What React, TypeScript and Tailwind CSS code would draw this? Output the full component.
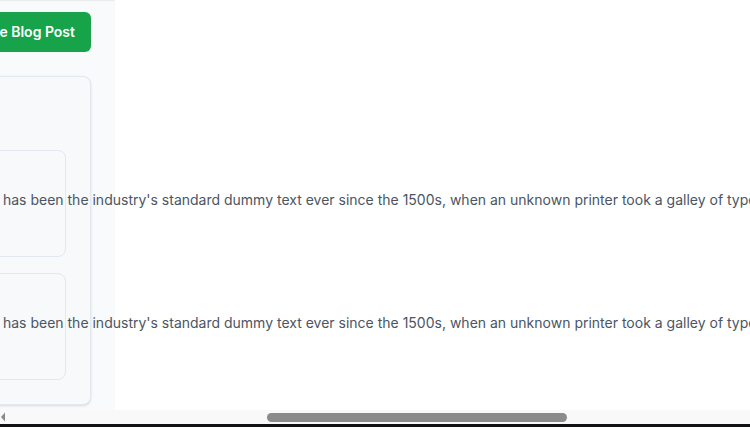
import { useLayoutEffect, useRef } from "react";

const LEAD = "Lorem Ipsum is simply dummy text of the printing and typesetting industry. Lorem Ipsum ";
const REST =
  "has been the industry's standard dummy text ever since the 1500s, when an unknown printer took a galley of type and scrambled it to make a type specimen book.";

function PostCard({ title, date, spanRef }: { title: string; date: string; spanRef?: React.Ref<HTMLSpanElement> }) {
  return (
    <article className="h-[107px] rounded-lg border border-[#e2e8f0] bg-[#f7f9fa] px-4 pt-[15px]">
      <h3 className="text-base leading-6 font-semibold text-gray-900">{title}</h3>
      <p className="text-sm leading-5 text-[#4b5563] whitespace-nowrap">
        {LEAD}
        <span ref={spanRef}>{REST}</span>
      </p>
      <p className="mt-1 text-xs leading-5 text-gray-400">{date}</p>
    </article>
  );
}

export default function App() {
  const scroller = useRef<HTMLDivElement>(null);
  const mark = useRef<HTMLSpanElement>(null);

  useLayoutEffect(() => {
    const s = scroller.current;
    const m = mark.current;
    if (!s || !m) return;
    const sRect = s.getBoundingClientRect();
    const mRect = m.getBoundingClientRect();
    s.scrollLeft = mRect.left - sRect.left - 3;
  }, []);

  return (
    <div className="w-[750px] h-[427px] flex flex-col bg-white overflow-hidden font-['Inter','Noto_Sans',sans-serif]">
      <div ref={scroller} className="h-[410px] overflow-hidden">
        <div className="flex h-full w-max">
          <main className="w-[766px] shrink-0 h-full bg-[#f9fafb] shadow-[inset_0_2px_2px_-1px_rgba(0,0,0,0.07)] px-6 pt-3">
            <div className="flex items-center justify-between">
              <h1 className="text-2xl font-bold text-gray-900">Blog Posts</h1>
              <button className="h-10 px-4 rounded-md bg-[#16a34a] text-white text-sm font-semibold">
                Create Blog Post
              </button>
            </div>
            <section className="mt-6 rounded-lg border border-[#e2e8f0] bg-[#f7f9fa] shadow-sm p-6">
              <h2 className="h-7 text-lg font-semibold text-gray-900">Recent Posts</h2>
              <div className="mt-[21px] flex flex-col gap-4">
                <PostCard title="What is Lorem Ipsum?" date="May 12, 2024" spanRef={mark} />
                <PostCard title="Why do we use it?" date="May 10, 2024" />
              </div>
            </section>
          </main>
          <div className="w-[900px] shrink-0" />
        </div>
      </div>
      <div className="h-[14px] bg-[#f9f9f9] flex items-center">
        <svg width="6" height="10" viewBox="0 0 6 10" className="shrink-0 ml-[1px]">
          <polygon points="4,0.5 4,9.5 0,5" fill="#8a8a8a" />
        </svg>
        <div className="ml-[260px] w-[300px] h-[9px] rounded-full bg-[#8b8b8b]" />
      </div>
      <div className="h-[3px] bg-[#111116]" />
    </div>
  );
}
